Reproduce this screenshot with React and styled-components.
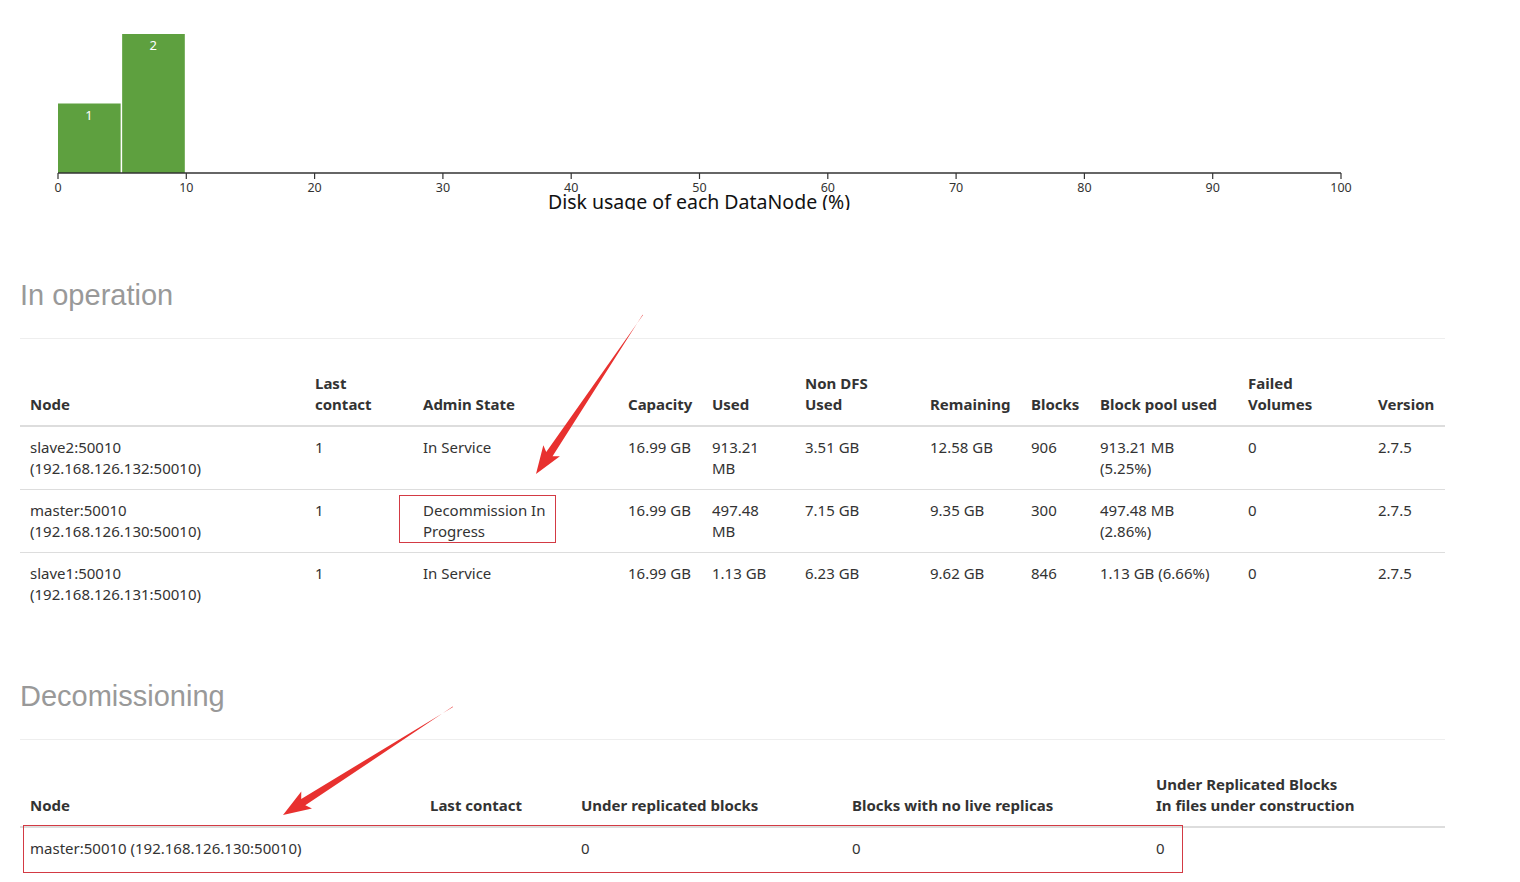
import React from 'react';
import styled, { createGlobalStyle } from 'styled-components';

const GlobalStyle = createGlobalStyle`
  html, body {
    margin: 0;
    padding: 0;
    background: #fff;
  }
  body {
    font-family: "Noto Sans", "Open Sans", sans-serif;
    font-size: 15px;
    color: #333;
  }
`;

const Page = styled.div`
  position: relative;
  width: 1520px;
  min-height: 882px;
  overflow: hidden;
`;

const ChartBox = styled.div`
  height: 210px;
  overflow: hidden;
`;

const Section = styled.section`
  margin: ${p => p.top}px 20px 0 20px;
  width: 1425px;
`;

const Heading = styled.h3`
  margin: 0;
  padding-bottom: 27px;
  border-bottom: 1px solid #eee;
  font-family: "Liberation Sans", Arial, sans-serif;
  font-weight: 400;
  font-size: 29px;
  line-height: 32px;
  color: #999;
`;

const Table = styled.table`
  margin-top: 24px;
  width: 100%;
  table-layout: fixed;
  border-collapse: collapse;
  border-spacing: 0;
`;

const Th = styled.th`
  padding: 10px;
  text-align: left;
  vertical-align: bottom;
  font-weight: 700;
  line-height: 21px;
  color: #333;
  border-bottom: 2px solid #ddd;
`;

const Td = styled.td`
  padding: 10px;
  vertical-align: top;
  line-height: 21px;
  color: #333;
  border-top: 1px solid #ddd;
  tr:first-child > & {
    border-top: none;
  }
`;

const Overlay = styled.svg`
  position: absolute;
  left: 0;
  top: 0;
  pointer-events: none;
`;

const GREEN = '#5ea03f';
const RED = '#e8312f';

const X0 = 58;
const X100 = 1341;
const AXIS_Y = 173;
const sx = v => X0 + ((X100 - X0) * v) / 100;
const sy = n => AXIS_Y - n * 69.5;

const bins = [
  { from: 0, to: 5, count: 1 },
  { from: 5, to: 10, count: 2 },
];

const UsageChart = () => (
  <ChartBox>
    <svg width="1400" height="210" style={{ display: 'block' }}>
      {bins.map(b => (
        <g key={b.from}>
          <rect
            x={sx(b.from)}
            y={sy(b.count)}
            width={sx(b.to) - sx(b.from) - 1.5}
            height={AXIS_Y - sy(b.count)}
            fill={GREEN}
          />
          <text
            x={(sx(b.from) + sx(b.to)) / 2 - 1}
            y={sy(b.count) + 16}
            fill="#fff"
            fontSize="13"
            textAnchor="middle"
            fontFamily="Noto Sans, sans-serif"
          >
            {b.count}
          </text>
        </g>
      ))}
      <line x1={X0} x2={X100} y1={AXIS_Y} y2={AXIS_Y} stroke="#333" strokeWidth="1.5" />
      {Array.from({ length: 11 }, (_, i) => i * 10).map(v => (
        <g key={v}>
          <line x1={sx(v)} x2={sx(v)} y1={AXIS_Y} y2={AXIS_Y + 6} stroke="#333" strokeWidth="1.2" />
          <text
            x={sx(v)}
            y={AXIS_Y + 19}
            fontSize="12.5"
            fill="#333"
            textAnchor="middle"
            fontFamily="Noto Sans, sans-serif"
          >
            {v}
          </text>
        </g>
      ))}
      <text
        x="699"
        y="209"
        fontSize="19.5"
        fill="#111"
        textAnchor="middle"
        fontFamily="Noto Sans, sans-serif"
      >
        Disk usage of each DataNode (%)
      </text>
    </svg>
  </ChartBox>
);

const liveCols = [285, 108, 205, 84, 93, 125, 101, 69, 148, 130, 77];

const liveHeaders = [
  ['Node'],
  ['Last', 'contact'],
  ['Admin State'],
  ['Capacity'],
  ['Used'],
  ['Non DFS', 'Used'],
  ['Remaining'],
  ['Blocks'],
  ['Block pool used'],
  ['Failed', 'Volumes'],
  ['Version'],
];

const liveNodes = [
  {
    host: 'slave2:50010',
    addr: '192.168.126.132:50010',
    contact: 1,
    state: 'In Service',
    capacity: '16.99 GB',
    used: '913.21 MB',
    nonDfs: '3.51 GB',
    remaining: '12.58 GB',
    blocks: 906,
    pool: '913.21 MB (5.25%)',
    failed: 0,
    version: '2.7.5',
  },
  {
    host: 'master:50010',
    addr: '192.168.126.130:50010',
    contact: 1,
    state: 'Decommission In Progress',
    capacity: '16.99 GB',
    used: '497.48 MB',
    nonDfs: '7.15 GB',
    remaining: '9.35 GB',
    blocks: 300,
    pool: '497.48 MB (2.86%)',
    failed: 0,
    version: '2.7.5',
  },
  {
    host: 'slave1:50010',
    addr: '192.168.126.131:50010',
    contact: 1,
    state: 'In Service',
    capacity: '16.99 GB',
    used: '1.13 GB',
    nonDfs: '6.23 GB',
    remaining: '9.62 GB',
    blocks: 846,
    pool: '1.13 GB (6.66%)',
    failed: 0,
    version: '2.7.5',
  },
];

const decomCols = [400, 151, 271, 304, 299];

const decomHeaders = [
  ['Node'],
  ['Last contact'],
  ['Under replicated blocks'],
  ['Blocks with no live replicas'],
  ['Under Replicated Blocks', 'In files under construction'],
];

const HeaderRow = ({ headers }) => (
  <tr>
    {headers.map((lines, i) => (
      <Th key={i}>
        {lines.map((l, j) => (
          <React.Fragment key={j}>
            {j > 0 && <br />}
            {l}
          </React.Fragment>
        ))}
      </Th>
    ))}
  </tr>
);

const Cols = ({ widths }) => (
  <colgroup>
    {widths.map((w, i) => (
      <col key={i} style={{ width: w }} />
    ))}
  </colgroup>
);

// arrow polygon from tail to tip, thin tail widening into a head
const arrowPoints = (tx, ty, hx, hy) => {
  const dx = hx - tx;
  const dy = hy - ty;
  const len = Math.hypot(dx, dy);
  const ux = dx / len;
  const uy = dy / len;
  const nx = -uy;
  const ny = ux;
  const bx = hx - ux * 24;
  const by = hy - uy * 24;
  const pts = [
    [tx, ty],
    [bx + nx * 3.8, by + ny * 3.8],
    [bx + nx * 10 - ux * 4, by + ny * 10 - uy * 4],
    [hx, hy],
    [bx - nx * 10 - ux * 4, by - ny * 10 - uy * 4],
    [bx - nx * 3.8, by - ny * 3.8],
    [tx + nx * 0.5, ty + ny * 0.5],
  ];
  return pts.map(p => p.join(',')).join(' ');
};

const Annotations = () => (
  <Overlay width="1520" height="882">
    <rect x="399.5" y="495.5" width="156" height="47" fill="none" stroke="#d33a44" strokeWidth="1" />
    <rect x="23.5" y="825.5" width="1159" height="47" fill="none" stroke="#d33a44" strokeWidth="1" />
    <polygon points={arrowPoints(643, 315, 536, 474)} fill={RED} />
    <polygon points={arrowPoints(453, 707, 283, 815)} fill={RED} />
  </Overlay>
);

export default function App() {
  return (
    <Page>
      <GlobalStyle />
      <UsageChart />

      <Section top={69}>
        <Heading>In operation</Heading>
        <Table>
          <Cols widths={liveCols} />
          <thead>
            <HeaderRow headers={liveHeaders} />
          </thead>
          <tbody>
            {liveNodes.map(n => (
              <tr key={n.host}>
                <Td>
                  {n.host}
                  <br />({n.addr})
                </Td>
                <Td>{n.contact}</Td>
                <Td>{n.state}</Td>
                <Td>{n.capacity}</Td>
                <Td>{n.used}</Td>
                <Td>{n.nonDfs}</Td>
                <Td>{n.remaining}</Td>
                <Td>{n.blocks}</Td>
                <Td>{n.pool}</Td>
                <Td>{n.failed}</Td>
                <Td>{n.version}</Td>
              </tr>
            ))}
          </tbody>
        </Table>
      </Section>

      <Section top={65}>
        <Heading>Decomissioning</Heading>
        <Table>
          <Cols widths={decomCols} />
          <thead>
            <HeaderRow headers={decomHeaders} />
          </thead>
          <tbody>
            <tr>
              <Td>master:50010 (192.168.126.130:50010)</Td>
              <Td></Td>
              <Td>0</Td>
              <Td>0</Td>
              <Td>0</Td>
            </tr>
          </tbody>
        </Table>
      </Section>

      <Annotations />
    </Page>
  );
}
